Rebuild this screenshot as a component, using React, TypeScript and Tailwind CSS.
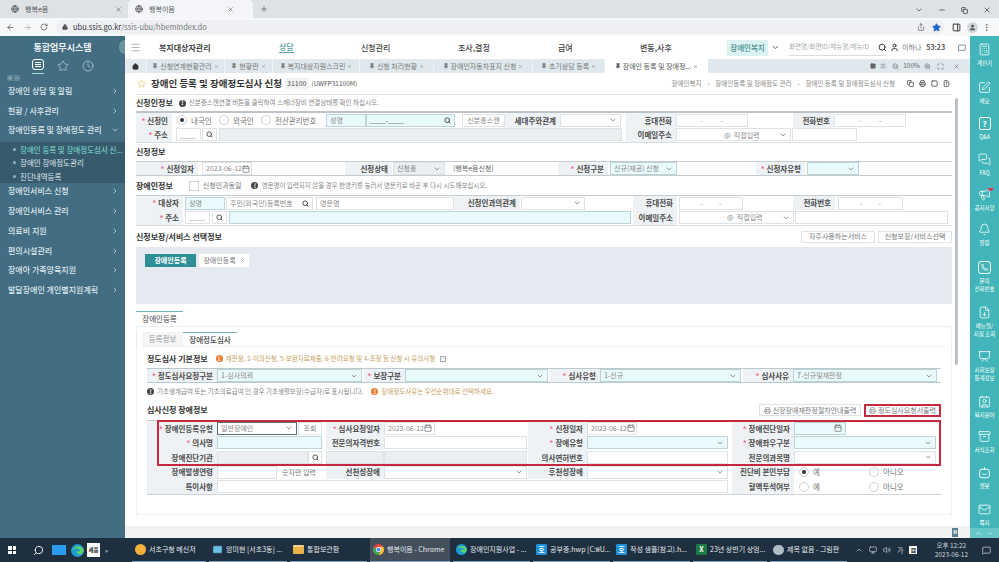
import type { ReactNode } from "react";
import {
  ArrowLeft,
  ArrowRight,
  Bell,
  Calculator,
  Calendar,
  ChevronDown,
  ChevronRight,
  ChevronUp,
  Clock,
  Contact,
  Copy,
  EllipsisVertical,
  FileDown,
  FileQuestion,
  Globe,
  House,
  Lock,
  Mail,
  Maximize,
  Megaphone,
  Menu,
  MessageSquare,
  MessagesSquare,
  Minus,
  Phone,
  Pin,
  Plus,
  Presentation,
  Printer,
  RotateCw,
  Search,
  Share,
  Square,
  SquarePen,
  Star,
  User,
  Volume2,
  X,
  ZoomIn,
  ZoomOut,
  Archive,
  PanelRight,
  Monitor,
} from "lucide-react";

const font = { fontFamily: '"Noto Sans CJK KR", "Liberation Sans", sans-serif' };

// ---- small form parts ----
const Label = ({ className = "", req, children }: { className?: string; req?: boolean; children: ReactNode }) => (
  <div className={`flex h-full shrink-0 items-center justify-end whitespace-nowrap bg-[#eef2f5] pr-[4px] text-[7.5px] font-bold text-[#4a4a4a] ${className}`}>
    {req && <span className="mr-[2px] text-[#ee6f93]">*</span>}
    {children}
  </div>
);

const Box = ({ className = "", children }: { className?: string; children?: ReactNode }) => (
  <div className={`flex h-[13px] shrink-0 items-center overflow-hidden whitespace-nowrap border border-[#dde2e6] bg-white px-[3px] text-[7px] text-[#888] ${className}`}>
    {children}
  </div>
);

const Sel = ({ className = "", children }: { className?: string; children?: ReactNode }) => (
  <Box className={`justify-between ${className}`}>
    <span>{children}</span>
    <ChevronDown className="h-[8px] w-[8px] shrink-0 text-[#666]" strokeWidth={2} />
  </Box>
);

const DateBox = ({ className = "", value }: { className?: string; value?: string }) => (
  <Box className={`justify-between ${className}`}>
    <span>{value}</span>
    <Calendar className="h-[8px] w-[8px] shrink-0 text-[#666]" />
  </Box>
);

const SearchBtn = ({ className = "" }: { className?: string }) => (
  <Box className={`justify-center !px-0 ${className}`}>
    <Search className="h-[7px] w-[7px] text-[#444]" strokeWidth={3} />
  </Box>
);

const Radio = ({ on, children, className = "" }: { on?: boolean; children: ReactNode; className?: string }) => (
  <div className={`flex shrink-0 items-center gap-[4px] text-[7.5px] text-[#777] ${className}`}>
    <span className="flex h-[10px] w-[10px] items-center justify-center rounded-full border border-[#ccd2d6] bg-white">
      {on && <span className="h-[4px] w-[4px] rounded-full bg-[#333]" />}
    </span>
    {children}
  </div>
);

const Dot = ({ orange }: { orange?: boolean }) => (
  <span className={`mr-[3px] flex h-[7px] w-[7px] shrink-0 items-center justify-center rounded-full text-[6px] font-bold leading-none text-white ${orange ? "bg-[#ea7d33]" : "bg-[#444]"}`}>
    !
  </span>
);

const Heading = ({ className = "", children }: { className?: string; children: ReactNode }) => (
  <div className={`text-[8px] font-bold text-[#333] ${className}`}>{children}</div>
);

const tealInput = "!bg-[#e9fafc] !border-[#bcd3d8]";
const grayInput = "!bg-[#eceef0]";

// ---- sidebar ----
const menu = ["장애인 상담 및 알림", "현황 / 사후관리"];
const menu2 = ["장애인서비스 신청", "장애인서비스 관리", "의료비 지원", "편의시설관리", "장애아 가족양육지원", "발달장애인 개인별지원계획"];

const MenuRow = ({ name, open }: { name: string; open?: boolean }) => (
  <div className="flex h-[19.8px] items-center justify-between pl-[8px] pr-[6px] text-[8px] font-medium text-[#dfe8ec]">
    <span>{name}</span>
    {open ? <ChevronDown className="h-[8px] w-[8px]" /> : <ChevronRight className="h-[8px] w-[8px]" />}
  </div>
);

const SubRow = ({ name, active }: { name: string; active?: boolean }) => (
  <div className={`flex h-[13.5px] items-center ${active ? "text-[#7ee0d3]" : "text-[#dfe8ec]"}`}>
    <span className="mr-[4px] h-[3px] w-[3px] shrink-0 rounded-full bg-[#8fb4c0]" />
    <span className="truncate">{name}</span>
  </div>
);

const Sidebar = () => (
  <aside className="flex w-[125px] shrink-0 flex-col bg-[#426d82]">
    <div className="relative h-[22px] pt-[5px] text-center text-[9px] font-bold text-[#eef3f5]">
      통합업무시스템
      <span className="absolute right-0 top-[4px] h-[14px] w-[6px] rounded-l-full bg-[#6f929f]" />
    </div>
    <div className="flex h-[16px] items-center justify-center gap-[13px] text-[#d5e8e8]">
      <span className="border-b border-[#9fe0dc] pb-[3px]">
        <span className="flex h-[11px] w-[12px] flex-col justify-center gap-[1px] rounded-[3px] border border-white px-[2px]">
          <span className="h-px bg-white" />
          <span className="h-px bg-white" />
          <span className="h-px bg-white" />
        </span>
      </span>
      <Star className="h-[12px] w-[12px]" strokeWidth={1.2} />
      <Clock className="h-[12px] w-[12px]" strokeWidth={1.2} />
    </div>
    <div className="flex h-[7px] items-center gap-[1px] pl-[7px] text-[#b9cdd6]">
      <Plus className="h-[6px] w-[6px] bg-[#5d8596]" />
      <Minus className="h-[6px] w-[6px] bg-[#5d8596]" />
    </div>
    {menu.map((m) => (
      <MenuRow key={m} name={m} />
    ))}
    <MenuRow name="장애인등록 및 장애정도 관리" open />
    <div className="mt-[2px] h-[41px] whitespace-nowrap bg-[#385a6d] pl-[13px] text-[7.5px]">
      <SubRow name="장애인 등록 및 장애정도심사 신..." active />
      <SubRow name="장애인 장애정도관리" />
      <SubRow name="진단내역등록" />
    </div>
    <div className="-mt-[2px]">
      {menu2.map((m) => (
        <MenuRow key={m} name={m} />
      ))}
    </div>
  </aside>
);

// ---- chrome ----
const BrowserChrome = () => (
  <>
    <div className="flex h-[18px] shrink-0 items-end bg-[#dee1e6] text-[7px] text-[#555]">
      <div className="flex h-[18px] w-[128px] items-center justify-between pl-[11px] pr-[6px]">
        <span className="flex items-center gap-[6px]">
          <Globe className="h-[8px] w-[8px]" strokeWidth={2.5} />
          행복e음
        </span>
        <X className="h-[7px] w-[7px]" />
      </div>
      <div className="flex h-[18px] w-[125px] items-center justify-between rounded-t-[5px] bg-[#f3f5f8] pl-[7px] pr-[19px]">
        <span className="flex items-center gap-[6px]">
          <Globe className="h-[8px] w-[8px]" strokeWidth={2.5} />
          행복이음
        </span>
        <X className="h-[7px] w-[7px]" />
      </div>
      <Plus className="mb-[5px] ml-[7px] h-[8px] w-[8px]" strokeWidth={2} />
      <div className="ml-auto mb-[4px] flex items-center gap-[15px] pr-[8px] text-[#333]">
        <ChevronDown className="h-[8px] w-[8px]" />
        <Minus className="h-[8px] w-[8px]" />
        <Copy className="h-[7px] w-[7px]" strokeWidth={2.5} />
        <X className="h-[8px] w-[8px]" />
      </div>
    </div>
    <div className="flex h-[18px] shrink-0 items-center bg-[#f7f8fa] pl-[6px] pr-[8px] text-[#555]">
      <ArrowLeft className="h-[9px] w-[9px]" />
      <ArrowRight className="ml-[8px] h-[9px] w-[9px] text-[#aaa]" />
      <RotateCw className="ml-[8px] h-[8px] w-[8px]" />
      <div className="ml-[8px] flex h-[14px] flex-1 items-center rounded-full bg-[#eef0f3] pl-[6px] text-[7.5px]">
        <Lock className="h-[6px] w-[6px]" fill="#555" />
        <span className="ml-[5px] text-[#333]">ubu.ssis.go.kr</span>
        <span className="text-[#777]">/ssis-ubu/hbemIndex.do</span>
        <div className="ml-auto flex items-center gap-[7px] pr-[3px]">
          <Share className="h-[8px] w-[8px]" />
          <Star className="h-[9px] w-[9px] text-[#1a65d6]" fill="#1a65d6" />
        </div>
      </div>
      <PanelRight className="ml-[8px] h-[9px] w-[9px] text-[#333]" strokeWidth={2.5} />
      <span className="ml-[6px] flex h-[11px] w-[11px] items-center justify-center rounded-full bg-[#d5d9e0]">
        <User className="h-[7px] w-[7px]" fill="#555" />
      </span>
      <EllipsisVertical className="ml-[4px] h-[9px] w-[9px]" />
    </div>
  </>
);

// ---- top nav ----
const TopNav = () => (
  <div className="flex h-[23px] shrink-0 items-center bg-white pl-[5px] text-[8px] font-medium text-[#444]">
    <Menu className="h-[11px] w-[11px] text-[#777]" strokeWidth={1.2} />
    <span className="ml-[18px] w-[120px] font-bold">복지대상자관리</span>
    <span className="w-[82px] pb-[2px] text-[#5b9fa0]">
      <span className="border-b border-[#5b9fa0]">상담</span>
    </span>
    <span className="w-[97px]">신청관리</span>
    <span className="w-[100px]">조사,결정</span>
    <span className="w-[82px]">급여</span>
    <span className="w-[87px]">변동,사후</span>
    <span className="flex h-[16px] w-[41px] items-center justify-center bg-[#dcf1f1] text-[7.5px] text-[#3d8c90]">장애인복지</span>
    <ChevronDown className="ml-[3px] h-[9px] w-[9px] text-[#555]" strokeWidth={2.5} />
    <span className="ml-[9px] flex h-[16px] w-[98px] items-center justify-between border-b border-[#d8dde0] text-[6.5px] font-normal text-[#a8acb0]">
      화면명/화면ID/메뉴명/메뉴ID
      <Search className="h-[9px] w-[9px] text-[#333]" strokeWidth={2.5} />
    </span>
    <User className="ml-[3px] h-[9px] w-[9px] text-[#333]" strokeWidth={2.5} />
    <span className="ml-[3px] text-[7px] font-normal text-[#777]">이하나</span>
    <span className="ml-[5px] text-[7px] font-bold text-[#555]">53:23</span>
    <MessageSquare className="ml-[13px] h-[8px] w-[8px] text-[#555]" />
  </div>
);

const tabs = [
  { name: "신청연계현황관리", w: "w-[78px]" },
  { name: "현황판", w: "w-[48px]" },
  { name: "복지대상자원스크린", w: "w-[87px]" },
  { name: "신청 처리현황", w: "w-[74px]" },
  { name: "장애인자동차표지 신청", w: "w-[99px]" },
  { name: "초기상담 등록", w: "w-[72px]" },
];

const TabBar = () => (
  <div className="flex h-[14px] shrink-0 items-stretch bg-[#dfe8ec] text-[7px] text-[#777]">
    <div className="flex w-[22px] items-center justify-center border-r border-[#eef3f5] bg-[#e4ebee] text-[#333]">
      <House className="h-[7px] w-[7px]" fill="#333" />
    </div>
    {tabs.map((t) => (
      <div key={t.name} className={`flex ${t.w} items-center justify-center gap-[2px] whitespace-nowrap border-r border-[#eef3f5]`}>
        <Pin className="h-[6px] w-[6px]" fill="#777" />
        {t.name}
        <X className="h-[5px] w-[5px]" />
      </div>
    ))}
    <div className="flex w-[103px] items-center justify-center gap-[2px] whitespace-nowrap bg-white text-[#555]">
      <Pin className="h-[6px] w-[6px]" fill="#555" />
      장애인 등록 및 장애정...
      <X className="h-[5px] w-[5px]" />
    </div>
    <div className="ml-auto flex items-center gap-[4px] pr-[10px] text-[#666]">
      <Square className="h-[6px] w-[6px]" fill="#666" />
      <Menu className="h-[6px] w-[6px]" />
      <ZoomOut className="ml-[2px] h-[7px] w-[7px]" />
      <span className="text-[6.5px]">100%</span>
      <ZoomIn className="h-[7px] w-[7px]" />
      <Maximize className="ml-[2px] h-[7px] w-[7px]" />
      <X className="ml-[5px] h-[7px] w-[7px]" />
    </div>
  </div>
);

// ---- form ----
const TitleRow = () => (
  <div className="flex h-[22px] shrink-0 items-center border-b border-[#e3e5e7] pl-[1px] pr-[2px]">
    <Star className="h-[9px] w-[9px] text-[#e9b949]" strokeWidth={1.5} />
    <span className="ml-[5px] text-[9.5px] font-bold text-[#333]">장애인 등록 및 장애정도심사 신청</span>
    <span className="ml-[3px] bg-[#f0f1f2] px-[2px] text-[7px] text-[#555]">31100</span>
    <span className="ml-[3px] text-[6.5px] text-[#555]">(UWFP31100M)</span>
    <div className="ml-auto flex items-center gap-[6px] text-[6.5px] text-[#888]">
      <span>장애인복지</span>
      <span>›</span>
      <span>장애인등록 및 장애정도 관리</span>
      <span>›</span>
      <span>장애인 등록 및 장애정도심사 신청</span>
      <span className="ml-[6px] flex items-center gap-[5px] text-[#555]">
        <Copy className="h-[7px] w-[7px]" strokeWidth={3} />
        <Printer className="h-[7px] w-[7px]" strokeWidth={3} />
        <Square className="h-[7px] w-[7px]" strokeWidth={3} />
        <FileQuestion className="h-[7px] w-[7px]" strokeWidth={3} />
      </span>
    </div>
  </div>
);

const ApplicantTable = () => (
  <div className="border-b border-t-2 border-b-[#d9dee1] border-t-[#bcc4c9]">
    <div className="flex h-[14.5px] items-center">
      <Label req className="w-[36px]">신청인</Label>
      <div className="flex h-full w-[154px] shrink-0 items-center bg-white pl-[5px]">
        <Radio on className="w-[42px]">내국인</Radio>
        <Radio className="w-[42px]">외국인</Radio>
        <Radio>전산관리번호</Radio>
      </div>
      <Box className={`w-[40px] ${tealInput}`}>성명</Box>
      <Box className={`w-[89px] justify-between ${tealInput}`}>
        <span className="text-[#444]">____-____</span>
        <Search className="h-[7px] w-[7px] text-[#333]" strokeWidth={3} />
      </Box>
      <Box className="ml-[7px] w-[43px] justify-center bg-[#f7f9fa]">신분증스캔</Box>
      <Label className="w-[55px]">세대주와관계</Label>
      <Sel className="w-[61px]" />
      <Label className="ml-[5px] w-[50px]">휴대전화</Label>
      <Box className="w-[72px] justify-center gap-[18px]"><span>-</span><span>-</span></Box>
      <div className="w-[45px] shrink-0" />
      <Label className="w-[41px]">전화번호</Label>
      <Box className="w-[72px] justify-center gap-[18px]"><span>-</span><span>-</span></Box>
    </div>
    <div className="flex h-[14.5px] items-center">
      <Label req className="w-[36px]">주소</Label>
      <Box className="ml-[4px] w-[25px] text-[#444]">____</Box>
      <SearchBtn className="ml-[1px] w-[15px]" />
      <Box className={`ml-[2px] w-[403px] ${grayInput}`} />
      <Label className="ml-[4px] w-[50px]">이메일주소</Label>
      <Sel className="w-[115px] text-[#555]">
        <span className="ml-[44px]">@&nbsp;&nbsp;직접입력</span>
      </Sel>
      <Box className="ml-px w-[65px]" />
    </div>
  </div>
);

const RequestTable = () => (
  <div className="flex h-[15px] items-center border-y border-[#c5ccd0]">
    <Label req className="w-[62px]">신청일자</Label>
    <DateBox className="ml-[4px] w-[50px]" value="2023-06-12" />
    <div className="w-[93px] shrink-0" />
    <Label className="w-[47px]">신청상태</Label>
    <Sel className={`ml-[1px] w-[52px] ${grayInput}`}>신청중</Sel>
    <span className="ml-[8px] w-[105px] shrink-0 text-[7px] text-[#666]">(행복e음신청)</span>
    <Label req className="w-[50px]">신청구분</Label>
    <Sel className={`ml-[2px] w-[67px] ${tealInput}`}>신규(재공) 신청</Sel>
    <div className="w-[79px] shrink-0" />
    <Label req className="w-[49px]">신청자유형</Label>
    <Sel className={`ml-[2px] w-[52px] ${tealInput}`} />
  </div>
);

const TargetTable = () => (
  <div className="border-b border-t border-b-[#d9dee1] border-t-[#c5ccd0]">
    <div className="flex h-[14px] items-center">
      <Label req className="w-[47px]">대상자</Label>
      <Box className={`ml-[2px] w-[40px] ${tealInput}`}>성명</Box>
      <Box className="ml-px w-[87px] justify-between">
        주민(외국인)등록번호
        <Search className="h-[7px] w-[7px] text-[#333]" strokeWidth={3} />
      </Box>
      <Box className="ml-[3px] w-[138px]">영문명</Box>
      <Label className="w-[66px]">신청인과의관계</Label>
      <Sel className="ml-px w-[64px]" />
      <Label className="ml-[48px] w-[44px]">휴대전화</Label>
      <Box className="ml-[2px] w-[64px] justify-center gap-[16px]"><span>-</span><span>-</span></Box>
      <div className="w-[50px] shrink-0" />
      <Label className="w-[42px]">전화번호</Label>
      <Box className="ml-[3px] w-[65px] justify-center gap-[16px]"><span>-</span><span>-</span></Box>
    </div>
    <div className="flex h-[15px] items-center">
      <Label req className="w-[47px]">주소</Label>
      <Box className="ml-[2px] w-[25px] text-[#444]">____</Box>
      <SearchBtn className="ml-[2px] w-[15px]" />
      <Box className={`ml-[2px] w-[402px] ${tealInput}`} />
      <Label className="ml-[2px] w-[44px]">이메일주소</Label>
      <Sel className="ml-[2px] w-[115px] text-[#555]">
        <span className="ml-[44px]">@&nbsp;&nbsp;직접입력</span>
      </Sel>
      <Box className="ml-px w-[153px]" />
    </div>
  </div>
);

const ReviewTable = () => (
  <div className="relative">
    <div className="grid auto-rows-[14.6px] grid-cols-[70px_109px_58px_144px_59px_145px_62px_147px] items-center border-b border-t border-b-[#cdd3d7] border-t-[#c5ccd0]">
      <Label req>장애인등록유형</Label>
      <div className="flex items-center">
        <Sel className="w-[80px] !border-[#55707c] text-[#555]">일반장애인</Sel>
        <Box className="ml-[1px] w-[24px] justify-center">조회</Box>
      </div>
      <Label req>심사요청일자</Label>
      <DateBox className="w-[51px]" value="2023-06-12" />
      <Label req>신청일자</Label>
      <DateBox className="w-[50px]" value="2023-06-12" />
      <Label req>장애진단일자</Label>
      <DateBox className={`w-[52px] ${tealInput}`} />

      <Label req>의사명</Label>
      <Box className={`w-[105px] ${tealInput}`} />
      <Label>전문의자격번호</Label>
      <Box className="w-[143px]" />
      <Label req>장애유형</Label>
      <Sel className={`w-[141px] ${tealInput}`} />
      <Label req>장애좌우구분</Label>
      <Sel className={`w-[142px] ${tealInput}`} />

      <Label>장애진단기관</Label>
      <div className="flex items-center">
        <Box className={`w-[91px] ${grayInput}`} />
        <SearchBtn className="w-[14px]" />
      </div>
      <div className="flex h-full items-center">
        <Box className={`w-[58px] ${grayInput}`} />
      </div>
      <Box className={`w-[143px] ${grayInput}`} />
      <Label>의사면허번호</Label>
      <Box className="w-[141px]" />
      <Label>전문의과목명</Label>
      <Sel className="w-[142px]" />

      <Label>장애발생연령</Label>
      <div className="flex items-center">
        <Box className="w-[60px]" />
        <span className="ml-[5px] text-[7px] text-[#777]">숫자만 입력</span>
      </div>
      <Label>선천성장애</Label>
      <Sel className="w-[143px]" />
      <Label>후천성장애</Label>
      <Sel className="w-[141px]" />
      <Label>진단비 본인부담</Label>
      <div className="flex items-center pl-[5px]">
        <Radio on className="w-[70px]">예</Radio>
        <Radio>아니오</Radio>
      </div>

      <Label>특이사항</Label>
      <Box className="col-span-5 w-[511px]" />
      <Label>혈액투석여부</Label>
      <div className="flex items-center pl-[5px]">
        <Radio className="w-[70px]">예</Radio>
        <Radio>아니오</Radio>
      </div>
    </div>
    {/* red highlight drawn over the first three rows */}
    <div className="pointer-events-none absolute bottom-[29px] left-[10px] right-0 top-0 border-2 border-[#c5283f]" />
  </div>
);

const FormBody = () => (
  <div className="min-w-0 flex-1">
    <Heading className="flex h-[16px] items-center">
      신청인정보
      <span className="ml-[6px] flex items-center text-[6.5px] font-normal text-[#888]">
        <Dot />
        신분증스캔연결 버튼을 클릭하여 스캐너장비 연결상태를 확인 하십시오.
      </span>
    </Heading>
    <ApplicantTable />
    <Heading className="flex h-[18px] items-center">신청정보</Heading>
    <RequestTable />
    <div className="flex h-[19px] items-center">
      <Heading>장애인정보</Heading>
      <span className="ml-[16px] h-[10px] w-[10px] border border-[#ccd2d6]" />
      <span className="ml-[4px] text-[7px] text-[#777]">신청인과동일</span>
      <span className="ml-[10px] flex items-center text-[6.5px] text-[#888]">
        <Dot />
        영문명이 입력되지 않을 경우 한영키를 눌러서 영문키로 바꾼 후 다시 시도해보십시오.
      </span>
    </div>
    <TargetTable />
    <div className="flex h-[21px] items-center justify-between">
      <Heading>신청보장/서비스 선택정보</Heading>
      <div className="flex gap-[3px] text-[7px] text-[#777]">
        <span className="flex h-[12px] w-[74px] items-center justify-center border border-[#dde2e6]">자주사용하는서비스</span>
        <span className="flex h-[12px] w-[74px] items-center justify-center border border-[#dde2e6]">신청보장/서비스선택</span>
      </div>
    </div>
    <div className="flex h-[57px] items-start gap-[3px] bg-[#e4eaef] pl-[9px] pt-[7px]">
      <span className="flex h-[13px] w-[51px] items-center justify-center bg-[#2f8f96] text-[7px] font-bold text-white">장애인등록</span>
      <span className="flex h-[13px] w-[50px] items-center justify-center gap-[4px] bg-white text-[7px] text-[#777]">
        장애인등록
        <X className="h-[5px] w-[5px]" />
      </span>
    </div>
    <div className="mt-[7px] flex h-[15px] w-[47px] items-center justify-center border-t border-[#6fb5b8] text-[7.5px] text-[#444]">장애인등록</div>
    <div className="h-[189px] border border-[#eeeff0] px-[5px] pt-[5px]">
      <div className="flex h-[14px] text-[7.5px]">
        <span className="flex w-[41px] items-center justify-center bg-[#f4f5f6] text-[#999]">등록정보</span>
        <span className="flex w-[54px] items-center justify-center border-t border-[#6fb5b8] font-medium text-[#444]">장애정도심사</span>
      </div>
      <div className="h-[168px] border-t border-[#eeeff0] px-[5px]">
        <div className="flex h-[21px] items-center pt-[2px]">
          <Heading>정도심사 기본정보</Heading>
          <span className="ml-[8px] flex items-center text-[6.5px] text-[#c6a05b]">
            <Dot orange />
            재판정, 2-이의신청, 5-보완자료제출, 6-반려요청 및 4-조정 등 신청 시 유의사항
            <span className="ml-[5px] flex h-[6px] w-[6px] items-center justify-center border border-[#aaa]">
              <Minus className="h-[5px] w-[5px] text-[#777]" />
            </span>
          </span>
        </div>
        <div className="flex h-[15px] items-center border-y border-[#b9c9d0]">
          <Label req className="w-[70px]">정도심사요청구분</Label>
          <Sel className={`w-[145px] ${tealInput}`}>1-심사의뢰</Sel>
          <Label req className="ml-[2px] w-[41px]">보장구분</Label>
          <Sel className={`w-[143px] ${tealInput}`} />
          <Label req className="ml-[2px] w-[50px]">심사유형</Label>
          <Sel className={`w-[141px] ${tealInput}`}>1-신규</Sel>
          <Label req className="ml-[2px] w-[50px]">심사사유</Label>
          <Sel className={`w-[144px] ${tealInput}`}>7-신규및재판정</Sel>
        </div>
        <div className="flex h-[17px] items-center text-[6.5px] text-[#888]">
          <Dot />
          기초생계급여 또는 기초의료급여 인 경우 기초생활보장(수급자)로 표시됩니다.
          <span className="ml-[8px] flex items-center text-[#c6a05b]">
            <Dot orange />
            장애정도사유는 우선순위대로 선택하세요.
          </span>
        </div>
        <div className="flex h-[20px] items-center justify-between">
          <Heading>심사신청 장애정보</Heading>
          <div className="flex items-center gap-[3px] text-[7px] text-[#777]">
            <span className="flex h-[12px] w-[102px] items-center justify-center gap-[2px] border border-[#dde2e6]">
              <Printer className="h-[7px] w-[7px]" />
              신장장애재판정절차안내출력
            </span>
            <span className="flex h-[13px] w-[77px] items-center justify-center gap-[2px] border-2 border-[#c5283f]">
              <Printer className="h-[7px] w-[7px]" />
              정도심사요청서출력
            </span>
          </div>
        </div>
        <ReviewTable />
      </div>
    </div>
  </div>
);

const Main = () => (
  <main className="flex min-w-0 flex-1 flex-col bg-white">
    <TopNav />
    <TabBar />
    <div className="flex min-h-0 flex-1 flex-col">
      <div className="flex min-h-0 flex-1 pl-[11px]">
        <div className="flex min-w-0 flex-1 flex-col">
          <TitleRow />
          <div className="flex">
            <FormBody />
          </div>
        </div>
        <div className="ml-[3px] mr-[11px] w-[4px] shrink-0 pt-[25px]">
          <div className="h-[267px] w-[3px] rounded-full bg-[#bdc2c6]" />
        </div>
      </div>
      <div className="mt-auto flex h-[12px] shrink-0 items-center justify-end bg-[#f2f2f4] pr-[12px]">
        <span className="flex h-[9px] w-[6px] items-center justify-center bg-[#5b7f91] text-[5px] font-bold text-white">N</span>
      </div>
    </div>
  </main>
);

// ---- right rail ----
const railIcon = "h-[13px] w-[13px]";

const QnaIcon = () => (
  <span className="flex h-[13px] w-[12px] items-center justify-center rounded-[2px] border border-white text-[8px] font-bold leading-none">?</span>
);

const PhoneBox = () => (
  <span className="flex h-[13px] w-[13px] items-center justify-center rounded-[3px] border border-white">
    <Phone className="h-[7px] w-[7px]" strokeWidth={2.5} />
  </span>
);

const BotIcon = () => (
  <svg viewBox="0 0 16 16" className={railIcon} fill="none" stroke="currentColor" strokeWidth="1.2">
    <rect x="2" y="4" width="12" height="10.5" rx="3" />
    <path d="M8 4V1.5M5.5 9.5c.7 1.4 4.3 1.4 5 0" />
  </svg>
);

const rail: { label: ReactNode; icon: ReactNode; h: string }[] = [
  { label: "계산기", icon: <Calculator className={railIcon} strokeWidth={1.5} />, h: "h-[38px]" },
  { label: "메모", icon: <SquarePen className={railIcon} strokeWidth={1.5} />, h: "h-[36px]" },
  { label: "Q&A", icon: <QnaIcon />, h: "h-[36px]" },
  { label: "FAQ", icon: <MessagesSquare className={railIcon} strokeWidth={1.5} />, h: "h-[35px]" },
  {
    label: "공지사항",
    icon: (
      <span className="relative">
        <Megaphone className={railIcon} strokeWidth={1.5} />
        <span className="absolute -right-[2px] -top-[2px] h-[5px] w-[5px] rounded-full bg-[#e0344d]" />
      </span>
    ),
    h: "h-[35px]",
  },
  { label: "알림", icon: <Bell className={railIcon} strokeWidth={1.5} />, h: "h-[38px]" },
  { label: <>문의<br />전화번호</>, icon: <PhoneBox />, h: "h-[45px]" },
  { label: <>메뉴얼/<br />지침 조회</>, icon: <FileDown className={railIcon} strokeWidth={1.5} />, h: "h-[44px]" },
  { label: <>사회보장<br />통계정보</>, icon: <Presentation className={railIcon} strokeWidth={1.5} />, h: "h-[45px]" },
  { label: "복지용어", icon: <Contact className={railIcon} strokeWidth={1.5} />, h: "h-[35px]" },
  { label: "서식조회", icon: <Archive className={railIcon} strokeWidth={1.5} />, h: "h-[36px]" },
  { label: "챗봇", icon: <BotIcon />, h: "h-[37px]" },
  { label: "쪽지", icon: <Mail className={railIcon} strokeWidth={1.5} />, h: "h-[30px]" },
];

const RightRail = () => (
  <aside className="flex w-[29px] shrink-0 flex-col bg-[#41b5b9] text-white">
    <div className="min-h-0 flex-1 overflow-hidden pt-[7px]">
      {rail.map((r, i) => (
        <div key={i} className={`flex ${r.h} flex-col items-center overflow-hidden text-center`}>
          <span className="shrink-0">{r.icon}</span>
          <div className="mt-[3px] whitespace-nowrap text-[5.5px] leading-[8px]">{r.label}</div>
        </div>
      ))}
    </div>
    <div className="flex h-[10px] shrink-0 items-center justify-around bg-[#66c6c8] px-[2px]">
      <ChevronUp className="h-[7px] w-[7px]" />
      <ChevronDown className="h-[7px] w-[7px]" />
    </div>
  </aside>
);

// ---- windows taskbar ----
const ChromeIcon = () => (
  <svg viewBox="0 0 20 20" className="h-[11px] w-[11px] shrink-0">
    <circle cx="10" cy="10" r="10" fill="#e8453c" />
    <path d="M10 20a10 10 0 0 0 8.66-15H10l4 7z" fill="#fbc02d" />
    <path d="M1.34 5A10 10 0 0 0 10 20l4-8-4 2z" fill="#34a853" />
    <circle cx="10" cy="10" r="4.6" fill="#fff" />
    <circle cx="10" cy="10" r="3.4" fill="#4285f4" />
  </svg>
);

const EdgeIcon = ({ className = "h-[11px] w-[11px]" }: { className?: string }) => (
  <svg viewBox="0 0 20 20" className={`shrink-0 ${className}`}>
    <circle cx="10" cy="10" r="10" fill="#1b9ad6" />
    <path d="M20 10.5C19 5 14 3 10 3.5 5 4 2 8 1 12c1-3 4-5 8-5 3 0 5 2 5 4H8c0 3 3 5 6 5 2 0 4-1 6-5.500z" fill="#5ed16a" />
  </svg>
);

const tasks: { name: string; w: string; icon: ReactNode; active?: boolean }[] = [
  { name: "서초구청 메신저", w: "w-[74px]", icon: <span className="flex h-[11px] w-[11px] shrink-0 items-center justify-center rounded-full bg-[#f4b43c] text-[6px] text-[#7a4a10]">‿</span> },
  { name: "암미현 [서초3동] ...", w: "w-[78px]", icon: <Mail className="h-[11px] w-[11px] shrink-0 text-[#1f2f3f]" fill="#6cc0e6" strokeWidth={1} /> },
  { name: "통합보관함", w: "w-[77px]", icon: <span className="h-[9px] w-[11px] shrink-0 rounded-[1px] border-t-2 border-[#f6d488] bg-[#e9b24a]" /> },
  { name: "행복이음 - Chrome", w: "w-[80px]", icon: <ChromeIcon />, active: true },
  { name: "장애인지원사업 - ...", w: "w-[77px]", icon: <EdgeIcon /> },
  { name: "공부중.hwp [C:₩U...", w: "w-[77px]", icon: <span className="flex h-[11px] w-[11px] shrink-0 items-center justify-center rounded-[1px] bg-[#1f8fd6] text-[7px] font-bold text-white">호</span> },
  { name: "작성 샘플(참고).h...", w: "w-[77px]", icon: <span className="flex h-[11px] w-[11px] shrink-0 items-center justify-center rounded-[1px] bg-[#1f8fd6] text-[7px] font-bold text-white">호</span> },
  { name: "23년 상반기 상엄...", w: "w-[74px]", icon: <span className="flex h-[11px] w-[11px] shrink-0 items-center justify-center rounded-[1px] bg-[#1d7a45] text-[7px] font-bold text-white">X</span> },
  { name: "제목 없음 - 그림판", w: "w-[77px]", icon: <span className="h-[10px] w-[11px] shrink-0 rounded-full bg-[#aebcc4]" /> },
];

const Taskbar = () => (
  <div className="flex h-[24px] shrink-0 items-stretch bg-[#1e2f3f] text-[7px] text-[#e6eaed]">
    <div className="flex w-[132px] shrink-0 items-center pl-[8px]">
      <span className="grid h-[8px] w-[8px] grid-cols-2 gap-px">
        <span className="bg-white" />
        <span className="bg-white" />
        <span className="bg-white" />
        <span className="bg-white" />
      </span>
      <Search className="ml-[17px] h-[11px] w-[11px] -scale-x-100 text-white" strokeWidth={2} />
      <span className="ml-[8px] h-[10px] w-[14px] bg-[#2b9cf0]" />
      <EdgeIcon className="ml-[5px] h-[13px] w-[13px]" />
      <span className="ml-[3px] flex h-[14px] w-[13px] items-center justify-center bg-white text-[5.5px] font-bold text-[#222]">세움</span>
      <span className="ml-[5px] text-[6px]">»</span>
    </div>
    {tasks.map((t) => (
      <div key={t.name} className={`mr-[3px] flex ${t.w} shrink-0 items-center gap-[3px] overflow-hidden whitespace-nowrap border-b border-[#7fa6c4] pl-[3px] ${t.active ? "bg-[#43505c]" : ""}`}>
        {t.icon}
        {t.name}
      </div>
    ))}
    <div className="ml-[5px] flex flex-1 items-center gap-[6px] pr-[8px] text-[#cfd5da]">
      <ChevronUp className="h-[8px] w-[8px]" />
      <Monitor className="h-[8px] w-[8px]" />
      <Volume2 className="h-[8px] w-[8px]" />
      <span>가</span>
      <span className="flex h-[8px] w-[8px] items-center justify-center bg-white text-[5px] font-bold text-[#222]">圖</span>
      <div className="ml-auto flex flex-col items-center text-[6.5px] leading-[9px]">
        <span>오후 12:22</span>
        <span>2023-06-12</span>
      </div>
      <MessageSquare className="ml-[8px] h-[9px] w-[9px]" />
    </div>
  </div>
);

export default function App() {
  return (
    <div className="flex h-[562px] w-[999px] flex-col overflow-hidden bg-white" style={font}>
      <BrowserChrome />
      <div className="flex min-h-0 flex-1">
        <Sidebar />
        <Main />
        <RightRail />
      </div>
      <Taskbar />
    </div>
  );
}
